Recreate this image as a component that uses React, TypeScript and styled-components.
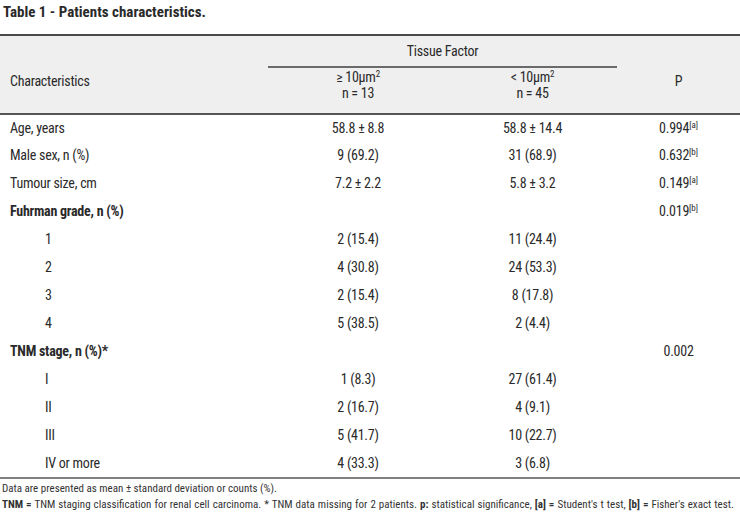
import React from "react";
import styled, { createGlobalStyle } from "styled-components";

const Global = createGlobalStyle`
  html, body { margin: 0; padding: 0; background: #ffffff; }
  body {
    font-family: "Roboto Condensed", "Liberation Sans Narrow", "Arial Narrow", "Roboto", sans-serif;
    font-stretch: condensed;
    color: #2a2a2a;
  }
`;

const Page = styled.div`
  width: 740px;
  height: 514px;
  overflow: hidden;
  background: #fff;
`;

const Title = styled.h1`
  margin: 0;
  padding: 4px 0 0 3px;
  height: 34px;
  box-sizing: border-box;
  font-size: 15px;
  line-height: 16px;
  font-weight: 700;
  color: #2a2a2a;
`;

const Table = styled.table`
  width: 740px;
  border-collapse: collapse;
  table-layout: fixed;
  font-size: 14px;
  line-height: 16px;
  letter-spacing: -0.25px;
  border-bottom: 2px solid #808080;
`;

const Head = styled.thead`
  background: #efefef;
  border-top: 2px solid #4a4a4a;
  border-bottom: 2px solid #555555;
`;

const HeadCell = styled.th<{ $align?: "left" | "center"; $valign?: "top" | "middle" | "bottom" }>`
  font-weight: 400;
  text-align: ${(p) => p.$align ?? "center"};
  vertical-align: ${(p) => p.$valign ?? "middle"};
  padding: 0;
`;

const SideHeadCell = styled(HeadCell)`
  padding: 0 0 24px ${(p) => (p.$align === "left" ? "10px" : "0")};
`;

const GroupCell = styled(HeadCell)`
  height: 30px;
  border-bottom: 2px solid #6a6a6a;
`;

const SubHeadCell = styled(HeadCell)`
  height: 44px;
  padding-top: 1px;
  vertical-align: top;
`;

const Row = styled.tr`
  height: 28px;
`;

const LabelCell = styled.td<{ $indent?: boolean; $bold?: boolean }>`
  padding: 0 0 2px ${(p) => (p.$indent ? "45px" : "10px")};
  font-weight: ${(p) => (p.$bold ? 700 : 400)};
  vertical-align: middle;
  white-space: nowrap;
`;

const ValueCell = styled.td`
  padding: 0 0 2px 0;
  text-align: center;
  vertical-align: middle;
  white-space: nowrap;
`;

const Sup = styled.sup`
  font-size: 9px;
  line-height: 0;
  vertical-align: 5px;
  letter-spacing: 0;
`;

const Unit = styled.sup`
  font-size: 9px;
  line-height: 0;
  vertical-align: 5px;
`;

const Notes = styled.div`
  padding: 2px 0 0 2px;
  font-size: 11px;
  line-height: 16px;
  color: #333;
`;

const NoteLine = styled.div<{ $wide?: boolean }>`
  white-space: nowrap;
  word-spacing: ${(p) => (p.$wide ? "0.5px" : "0")};
`;

const B = styled.b`
  font-weight: 700;
`;

type Rw = {
  label: string;
  a?: string;
  b?: string;
  p?: string;
  ref?: string;
  indent?: boolean;
  bold?: boolean;
};

const rows: Rw[] = [
  { label: "Age, years", a: "58.8 ± 8.8", b: "58.8 ± 14.4", p: "0.994", ref: "[a]" },
  { label: "Male sex, n (%)", a: "9 (69.2)", b: "31 (68.9)", p: "0.632", ref: "[b]" },
  { label: "Tumour size, cm", a: "7.2 ± 2.2", b: "5.8 ± 3.2", p: "0.149", ref: "[a]" },
  { label: "Fuhrman grade, n (%)", bold: true, p: "0.019", ref: "[b]" },
  { label: "1", indent: true, a: "2 (15.4)", b: "11 (24.4)" },
  { label: "2", indent: true, a: "4 (30.8)", b: "24 (53.3)" },
  { label: "3", indent: true, a: "2 (15.4)", b: "8 (17.8)" },
  { label: "4", indent: true, a: "5 (38.5)", b: "2 (4.4)" },
  { label: "TNM stage, n (%)*", bold: true, p: "0.002" },
  { label: "I", indent: true, a: "1 (8.3)", b: "27 (61.4)" },
  { label: "II", indent: true, a: "2 (16.7)", b: "4 (9.1)" },
  { label: "III", indent: true, a: "5 (41.7)", b: "10 (22.7)" },
  { label: "IV or more", indent: true, a: "4 (33.3)", b: "3 (6.8)" },
];

export default function App() {
  return (
    <Page>
      <Global />
      <Title>Table 1 - Patients characteristics.</Title>
      <Table>
        <colgroup>
          <col style={{ width: 268 }} />
          <col style={{ width: 180 }} />
          <col style={{ width: 169 }} />
          <col style={{ width: 123 }} />
        </colgroup>
        <Head>
          <tr>
            <SideHeadCell rowSpan={2} $align="left" $valign="bottom">
              Characteristics
            </SideHeadCell>
            <GroupCell colSpan={2}>Tissue Factor</GroupCell>
            <SideHeadCell rowSpan={2} $valign="bottom">
              P
            </SideHeadCell>
          </tr>
          <tr>
            <SubHeadCell>
              ≥ 10µm<Unit>2</Unit>
              <br />n = 13
            </SubHeadCell>
            <SubHeadCell>
              &lt; 10µm<Unit>2</Unit>
              <br />n = 45
            </SubHeadCell>
          </tr>
        </Head>
        <tbody>
          {rows.map((r) => (
            <Row key={r.label}>
              <LabelCell $indent={r.indent} $bold={r.bold}>
                {r.label}
              </LabelCell>
              <ValueCell>{r.a}</ValueCell>
              <ValueCell>{r.b}</ValueCell>
              <ValueCell>
                {r.p}
                {r.ref && <Sup>{r.ref}</Sup>}
              </ValueCell>
            </Row>
          ))}
        </tbody>
      </Table>
      <Notes>
        <NoteLine>Data are presented as mean ± standard deviation or counts (%).</NoteLine>
        <NoteLine $wide>
          <B>TNM =</B> TNM staging classification for renal cell carcinoma. * TNM data missing for 2 patients.{" "}
          <B>p:</B> statistical significance, <B>[a] =</B> Student's t test, <B>[b] =</B> Fisher's exact test.
        </NoteLine>
      </Notes>
    </Page>
  );
}
